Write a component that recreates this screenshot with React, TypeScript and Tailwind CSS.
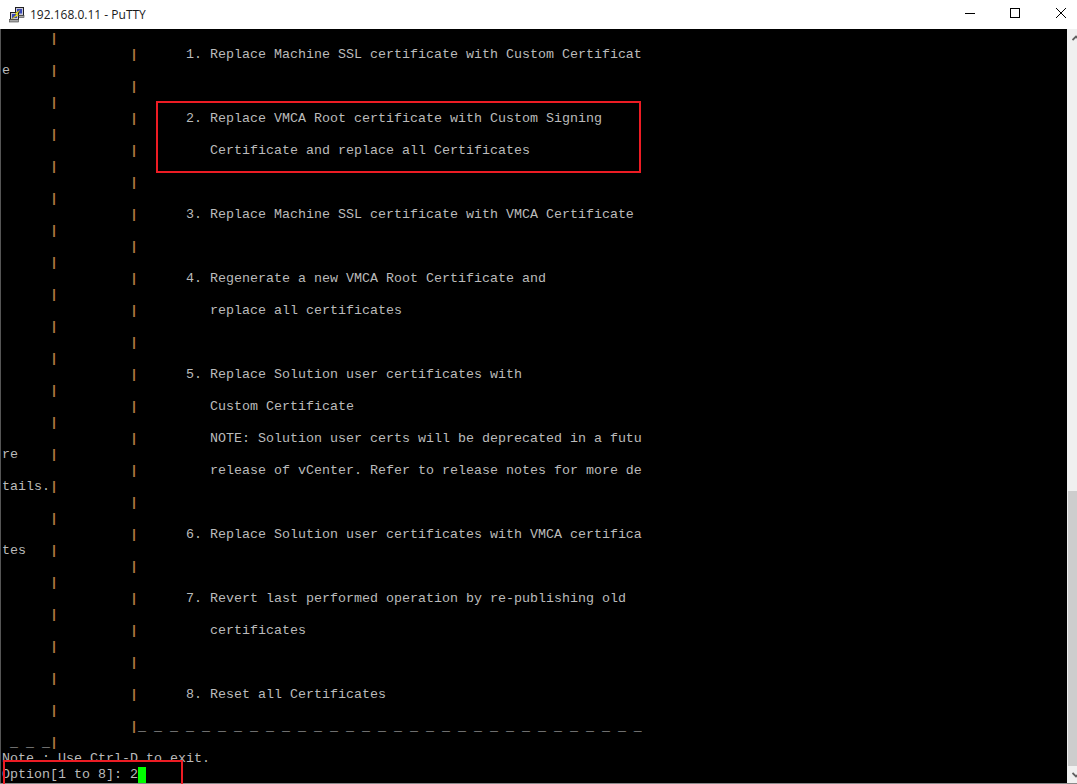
import React from "react";

// One terminal row per line, 16px tall on an 8px character grid.
type Row = { left?: string; mid?: boolean; text?: string; plain?: string };

const bar = "|";

const ROWS: Row[] = [
  { left: "" },
  { mid: true, text: "      1. Replace Machine SSL certificate with Custom Certificat" },
  { left: "e" },
  { mid: true },
  { left: "" },
  { mid: true, text: "      2. Replace VMCA Root certificate with Custom Signing" },
  { left: "" },
  { mid: true, text: "         Certificate and replace all Certificates" },
  { left: "" },
  { mid: true },
  { left: "" },
  { mid: true, text: "      3. Replace Machine SSL certificate with VMCA Certificate" },
  { left: "" },
  { mid: true },
  { left: "" },
  { mid: true, text: "      4. Regenerate a new VMCA Root Certificate and" },
  { left: "" },
  { mid: true, text: "         replace all certificates" },
  { left: "" },
  { mid: true },
  { left: "" },
  { mid: true, text: "      5. Replace Solution user certificates with" },
  { left: "" },
  { mid: true, text: "         Custom Certificate" },
  { left: "" },
  { mid: true, text: "         NOTE: Solution user certs will be deprecated in a futu" },
  { left: "re" },
  { mid: true, text: "         release of vCenter. Refer to release notes for more de" },
  { left: "tails." },
  { mid: true },
  { left: "" },
  { mid: true, text: "      6. Replace Solution user certificates with VMCA certifica" },
  { left: "tes" },
  { mid: true },
  { left: "" },
  { mid: true, text: "      7. Revert last performed operation by re-publishing old" },
  { left: "" },
  { mid: true, text: "         certificates" },
  { left: "" },
  { mid: true },
  { left: "" },
  { mid: true, text: "      8. Reset all Certificates" },
  { left: "" },
  { mid: true, text: "_ _ _ _ _ _ _ _ _ _ _ _ _ _ _ _ _ _ _ _ _ _ _ _ _ _ _ _ _ _ _ _" },
  { left: " _ _ _" },
  { plain: "Note : Use Ctrl-D to exit." },
];

function PuttyIcon() {
  return (
    <svg width="16" height="16" viewBox="0 0 16 16" className="shrink-0">
      {/* back monitor */}
      <rect x="6.5" y="0.5" width="8" height="8" fill="#c8c8d8" stroke="#202020" />
      <rect x="8" y="2" width="5" height="4.5" fill="#3848b8" />
      <rect x="7" y="8.5" width="8" height="2" fill="#a8a8a8" stroke="#404040" strokeWidth="0.6" />
      {/* front monitor */}
      <rect x="1.5" y="5.5" width="8" height="7" fill="#c8c8d8" stroke="#202020" />
      <rect x="3" y="7" width="5" height="4" fill="#3848b8" />
      <rect x="0.5" y="12.5" width="9" height="2.5" fill="#a8a8a8" stroke="#404040" strokeWidth="0.6" />
      {/* bolt */}
      <path d="M11 3 L6 6.5 L7.5 7.5 L2.5 12 L9.5 8.2 L8 7.2 Z" fill="#f8f020" stroke="#a89808" strokeWidth="0.4" />
    </svg>
  );
}

function TermRow({ row }: { row: Row }) {
  if (row.plain !== undefined) {
    return <div className="h-4 whitespace-pre">{row.plain}</div>;
  }
  if (row.mid) {
    return (
      <div className="h-4 whitespace-pre overflow-hidden">
        {" ".repeat(16)}
        <span className="font-bold text-[#b07a40]">{bar}</span>
        {row.text}
      </div>
    );
  }
  return (
    <div className="h-4 whitespace-pre">
      {(row.left ?? "").padEnd(6, " ")}
      <span className="font-bold text-[#b07a40]">{bar}</span>
    </div>
  );
}

export default function App() {
  return (
    <div className="relative flex h-[784px] w-[1077px] flex-col overflow-hidden bg-white">
      <header className="flex h-[29px] shrink-0 items-center bg-white pl-[9px]">
        <PuttyIcon />
        <span className="ml-[5px] font-['Open_Sans','Noto_Sans',sans-serif] text-xs text-[#1a1a1a]">
          192.168.0.11 - PuTTY
        </span>
        <div className="ml-auto flex items-center text-black">
          <svg width="46" height="29" viewBox="0 0 46 29" className="block">
            <path d="M26 13.5 H36" stroke="#000" strokeWidth="1" />
          </svg>
          <svg width="46" height="29" viewBox="0 0 46 29" className="block">
            <rect x="25.5" y="8.5" width="9" height="9" fill="none" stroke="#000" strokeWidth="1" />
          </svg>
          <svg width="46" height="29" viewBox="0 0 46 29" className="block">
            <path d="M25 8 L35 18 M35 8 L25 18" stroke="#000" strokeWidth="1" />
          </svg>
        </div>
      </header>

      <div className="flex min-h-0 flex-1 border-b border-[#8a8a8a]">
        <main className="h-full w-[1067px] overflow-hidden border-l border-[#555555] bg-black pl-px pt-[2px] font-['Liberation_Mono',monospace] text-[13.33px] leading-4 text-[#bbbbbb]">
          <div className="w-[640px] overflow-hidden">
            {ROWS.map((row, i) => (
              <TermRow key={i} row={row} />
            ))}
            <div className="flex h-4 whitespace-pre">
              Option[1 to 8]: 2
              <span className="h-4 w-2 bg-[#00ff00]" />
            </div>
          </div>
        </main>
        <aside className="flex w-[10px] shrink-0 flex-col bg-[#f0f0f0] pl-px">
          <div className="flex h-[17px] items-center pl-1">
            <svg width="8" height="6" viewBox="0 0 8 6" className="shrink-0">
              <path d="M0.5 5 L4 1.5 L7.5 5" fill="none" stroke="#606060" strokeWidth="1.8" />
            </svg>
          </div>
          <div className="mt-[445px] h-[275px] bg-[#cdcdcd]" />
          <div className="flex flex-1 items-center pl-1">
            <svg width="8" height="6" viewBox="0 0 8 6" className="shrink-0">
              <path d="M0.5 1 L4 4.5 L7.5 1" fill="none" stroke="#606060" strokeWidth="1.8" />
            </svg>
          </div>
        </aside>
      </div>

      {/* red annotation boxes drawn over the screenshot */}
      <div className="absolute left-[156px] top-[101px] h-[72px] w-[485px] border-2 border-[#ed1c24]" />
      <div className="absolute left-[3px] top-[760px] h-[40px] w-[180px] border-2 border-[#ed1c24]" />
    </div>
  );
}
